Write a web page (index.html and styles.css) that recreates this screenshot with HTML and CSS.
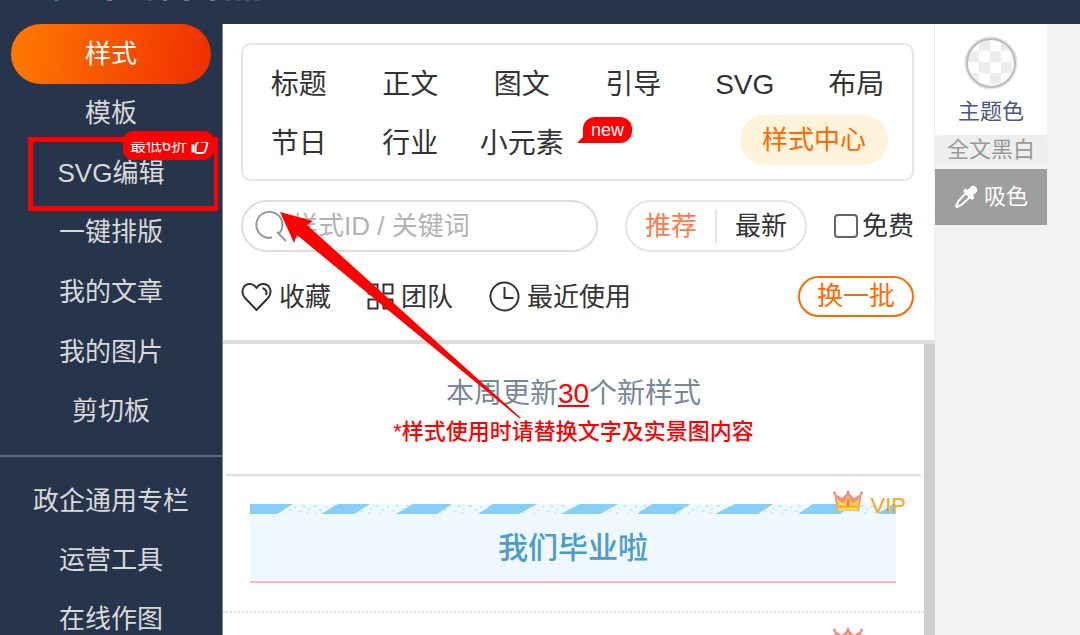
FILE: index.html
```html
<!DOCTYPE html>
<html lang="zh-CN">
<head>
<meta charset="utf-8">
<title>样式中心</title>
<link rel="stylesheet" href="styles.css">
</head>
<body>
<header class="topbar">
  <svg width="280" height="2" viewBox="0 0 280 2" aria-hidden="true">
    <path d="M55 .5h3" stroke="#4083ad"/><path d="M107 .5h2" stroke="#4083ad"/><path d="M109 .5h3" stroke="#b0675a"/>
    <path d="M163 .5h4M184 .5h5M210 .5h5" stroke="#707a8a"/>
    <path d="M143 .5h2M148 .5h5M225 .5h5M236 .5h5M245 .5h4M255 .5h5" stroke="#465268"/>
  </svg>
</header>
<div class="workspace">
  <nav class="sidebar">
    <div class="menu menu-main">
      <a class="menu-item active" href="#">样式</a>
      <a class="menu-item" href="#">模板</a>
      <a class="menu-item" href="#">SVG编辑
        <span class="promo">最低6折
          <svg width="18" height="20" viewBox="0 0 18 20" fill="none" stroke="#fff" stroke-width="2" aria-hidden="true"><path d="M2 8.500v8" stroke-width="3"/><path d="M5 8.500Q8 6 8 2.500Q11 1 11 6H15Q17 6 16 9L14 15.500Q13 17 11 17H6Q4.500 17 4.500 15z"/></svg>
        </span>
      </a>
      <a class="menu-item" href="#">一键排版</a>
      <a class="menu-item" href="#">我的文章</a>
      <a class="menu-item" href="#">我的图片</a>
      <a class="menu-item" href="#">剪切板</a>
    </div>
    <div class="menu menu-more">
      <a class="menu-item" href="#">政企通用专栏</a>
      <a class="menu-item" href="#">运营工具</a>
      <a class="menu-item" href="#">在线作图</a>
    </div>
  </nav>

  <main class="panel">
    <section class="filters">
      <div class="categories">
        <a href="#">标题</a><a href="#">正文</a><a href="#">图文</a><a href="#">引导</a><a href="#">SVG</a><a href="#">布局</a>
        <a href="#">节日</a><a href="#">行业</a>
        <a href="#" class="has-new">小元素<span class="new-tag">new</span></a>
        <button class="center-btn" type="button">样式中心</button>
      </div>
      <div class="search-row">
        <label class="search">
          <svg width="32" height="32" viewBox="0 0 32 32" fill="none" stroke="#999" stroke-width="2" aria-hidden="true"><path d="M17 27.500A13 13 0 1 1 23 24.500M22 22L31 31"/></svg>
          <input type="text" placeholder="样式ID / 关键词" aria-label="样式ID / 关键词">
        </label>
        <div class="sort">
          <button class="sort-btn on" type="button">推荐</button>
          <button class="sort-btn" type="button">最新</button>
        </div>
        <label class="free"><input type="checkbox">免费</label>
      </div>
      <div class="quick-row">
        <a class="quick" href="#">
          <svg width="31" height="30" viewBox="0 0 31 30" fill="none" stroke="#333" stroke-width="2" stroke-linejoin="round" aria-hidden="true"><path d="M15.500 28L4 16C-1 10 2 2 9 2Q13 2 15.500 6Q18 2 22 2C29 2 32 10 27 16z"/><path d="M21.500 6Q27 8 25 13"/></svg>收藏</a>
        <a class="quick" href="#">
          <svg width="27" height="27" viewBox="0 0 27 27" fill="none" stroke="#333" stroke-width="2" aria-hidden="true"><path d="M1.500 1.500h9v9h-9zM16.500 1.500h9v9h-9zM1.500 16.500h9v9h-9zM16.500 16.500h9v9h-9z"/></svg>团队</a>
        <a class="quick" href="#">
          <svg width="31" height="31" viewBox="0 0 31 31" fill="none" stroke="#333" stroke-width="2" aria-hidden="true"><circle cx="15.500" cy="15.500" r="14"/><path d="M15.500 6v11h9"/></svg>最近使用</a>
        <button class="refresh" type="button">换一批</button>
      </div>
    </section>

    <section class="results">
      <div class="result-list">
        <div class="notice">
          <h1>本周更新<a href="#">30</a>个新样式</h1>
          <p>*样式使用时请替换文字及实景图内容</p>
        </div>
        <article class="entry">
          <div class="vip">
            <svg class="crown" width="30" height="22" viewBox="0 0 30 22" aria-hidden="true"><path d="M1 3L9 8L15 2L21 8L29 3L26 21H4z" fill="#ee9288"/><path d="M3.500 8L11 14L15 5L19 14L26.500 8L25.500 21H4.500z" fill="#fbc83a"/><path d="M5 16.500h20" stroke="#eea02c"/><path d="M15 9v7" stroke="#e87a50" stroke-width="2"/><path d="M7 14h4M19 14h4M6 19h18" stroke="#ffdc60" stroke-width="2"/><g fill="#e78d8f"><circle cx="15" cy="2" r="1.500"/><circle cx="1.500" cy="3" r="1.500"/><circle cx="28.500" cy="3" r="1.500"/></g></svg>VIP
          </div>
          <div class="card">
            <svg class="ribbon" viewBox="0 0 646 10" preserveAspectRatio="none" aria-hidden="true">
              <defs><pattern id="snow" width="31" height="10" patternUnits="userSpaceOnUse"><rect width="31" height="10" fill="#eef8ff"/><g fill="#c3e6f8"><ellipse cx="3" cy="2" rx="2" ry="1"/><ellipse cx="9" cy="6" rx="1.500" ry="1"/><ellipse cx="14" cy="3" rx="1" ry="1"/><ellipse cx="19" cy="7" rx="2" ry=".8"/><ellipse cx="23" cy="2" rx="1.500" ry="1"/><ellipse cx="28" cy="5" rx="1" ry="1"/><ellipse cx="5" cy="9" rx="1" ry=".7"/><ellipse cx="26" cy="9" rx="1.500" ry=".7"/></g></pattern></defs>
              <rect width="646" height="10" fill="url(#snow)"/>
              <path fill="#87d0f3" d="M0 0H43L27 10H0zM88 0H120L104 10H71zM163 0H202L187 10H146zM243 0H287L269 10H228zM330 0H368L350 10H311zM402 0H440L425 10H387zM485 0H523L508 10H465zM563 0H605L590 10H548zM643 0H646V10H627z"/>
            </svg>
            <h2>我们毕业啦</h2>
          </div>
        </article>
        <article class="entry">
          <div class="vip">
            <svg class="crown" width="30" height="22" viewBox="0 0 30 22" aria-hidden="true"><path d="M1 3L9 8L15 2L21 8L29 3L26 21H4z" fill="#ee9288"/><path d="M3.500 8L11 14L15 5L19 14L26.500 8L25.500 21H4.500z" fill="#fbc83a"/><g fill="#e78d8f"><circle cx="15" cy="2" r="1.500"/><circle cx="1.500" cy="3" r="1.500"/><circle cx="28.500" cy="3" r="1.500"/></g></svg>VIP
          </div>
        </article>
      </div>
      <div class="scrollbar"></div>
    </section>
  </main>

  <aside class="tools">
    <button class="theme" type="button">
      <svg width="54" height="54" viewBox="0 0 54 54" aria-hidden="true"><defs><pattern id="chk" x="4" y="4" width="22" height="22" patternUnits="userSpaceOnUse"><rect width="22" height="22" fill="#fff"/><path d="M0 11h11v11H0zM11 0h11v11H11z" fill="#ededed"/></pattern></defs><circle cx="27" cy="27" r="25.500" fill="none" stroke="#e6e6e6" stroke-width="2"/><circle cx="27" cy="27" r="24" fill="url(#chk)" stroke="#bbb" stroke-width="2"/></svg>
      主题色</button>
    <button class="mono" type="button">全文黑白</button>
    <button class="picker" type="button">
      <svg width="24" height="24" viewBox="0 0 24 24" aria-hidden="true"><path d="M12 8L16 12L8 19.500L3 22L2 21L4.500 16z" fill="none" stroke="#fff" stroke-width="2"/><path d="M9 6L11.500 3.500L13.500 5L17 1.500Q19 0 22 2Q24 5 22.500 7L19 10.500L20.500 12.500L18 15z" fill="#fff"/></svg>吸色</button>
  </aside>
</div>
<div class="mark-box"></div>
<svg class="mark-arrow" width="242" height="208" viewBox="0 0 242 208" aria-hidden="true"><path d="M0 0L33 9L27 13L241 206L239 206L17 23L14 31z" fill="#f00"/></svg>
</body>
</html>
```
FILE: styles.css
```css
* { box-sizing: border-box; }
body {
  margin: 0;
  height: 100vh;
  display: flex;
  flex-direction: column;
  overflow: hidden;
  position: relative;
  background: #f1f3f3;
  color: #333;
  font: 26px/40px "Liberation Sans", "Noto Sans CJK SC", sans-serif;
}
a { color: inherit; text-decoration: none; }
button, input { font: inherit; color: inherit; padding: 0; }
button { border: 0; background: none; white-space: nowrap; }
h1, h2, p { margin: 0; }
svg { flex: none; }

.topbar { flex: none; height: 24px; background: #27354c; }
.topbar svg { display: block; }
.workspace { flex: 1; min-height: 0; display: flex; }

.sidebar {
  flex: none;
  width: 223px;
  background: #27354c;
  border-right: 1px solid #7d8594;
  color: #d9d9d9;
  overflow: hidden;
}
.menu { display: grid; grid-auto-rows: 1fr; padding: 0 11px; }
.menu-main { height: 417px; }
.menu-more { height: 194px; margin-top: 14px; padding-top: 14px; border-top: 2px solid #5b677a; }
.menu-item { position: relative; display: flex; align-items: center; justify-content: center; }
.menu-item.active {
  color: #fff;
  border-radius: 30px;
  background: linear-gradient(100deg, #ff7b00, #f02d00);
}
.promo {
  position: absolute;
  right: -3px;
  top: -12px;
  height: 29px;
  padding: 0 5px 0 7px;
  display: flex;
  align-items: center;
  gap: 4px;
  border-radius: 10px;
  background: #f00;
  color: #fff;
  font-size: 16px;
  line-height: 29px;
  white-space: nowrap;
}

.panel {
  flex: 1;
  min-width: 0;
  display: flex;
  flex-direction: column;
  background: #fff;
}
.filters { padding: 19px 20px 23px 18px; border-bottom: 4px solid #ddd; border-right: 1px solid #eee; }
.categories {
  display: grid;
  grid-template-columns: repeat(6, 1fr);
  grid-auto-rows: 59px;
  align-items: center;
  padding: 10px 0 6px;
  border: 2px solid #e6e6e6;
  border-radius: 10px;
  font-size: 28px;
  text-align: center;
}
.has-new { position: relative; }
.new-tag {
  position: absolute;
  left: 117px;
  top: -7px;
  width: 49px;
  height: 26px;
  border-radius: 12px 12px 12px 0;
  background: #f00;
  color: #fff;
  font-size: 18px;
  line-height: 26px;
}
.new-tag::before {
  content: "";
  position: absolute;
  left: -6px;
  bottom: 0;
  border: solid transparent;
  border-width: 0 0 8px 8px;
  border-bottom-color: #f00;
}
.center-btn {
  grid-column: 5 / 7;
  justify-self: end;
  align-self: start;
  height: 50px;
  margin-top: 1px;
  margin-right: 24px;
  padding: 0 22px;
  border-radius: 25px;
  background: #fff3dc;
  color: #ff6a00;
  font-size: 26px;
}
.search-row { display: flex; align-items: center; margin-top: 19px; }
.search {
  flex: 1;
  min-width: 0;
  height: 52px;
  display: flex;
  align-items: center;
  gap: 5px;
  padding: 0 12px;
  border: 2px solid #dedede;
  border-radius: 26px;
}
.search input { flex: 1; min-width: 0; height: 40px; border: 0; outline: 0; background: none; }
.search input::placeholder { color: #b3b3b3; opacity: 1; }
.sort {
  height: 52px;
  display: flex;
  align-items: center;
  margin-left: 27px;
  border: 2px solid #e6e6e6;
  border-radius: 26px;
}
.sort-btn { height: 34px; line-height: 34px; padding: 0 18px; }
.sort-btn.on { color: #ff7a45; border-right: 2px solid #e6e6e6; }
.free { display: flex; align-items: center; gap: 4px; margin-left: 27px; }
.free input {
  appearance: none;
  width: 24px;
  height: 24px;
  margin: 0;
  border: 2px solid #666;
  border-radius: 4px;
}
.quick-row { display: flex; align-items: center; gap: 36px; margin-top: 24px; }
.quick { display: flex; align-items: center; gap: 7px; }
.refresh {
  height: 41px;
  line-height: 37px;
  margin-left: auto;
  padding: 0 17px;
  border: 2px solid #ff6a00;
  border-radius: 21px;
  color: #ff6a00;
}

.results { flex: 1; min-height: 0; display: flex; }
.result-list { flex: 1; min-width: 0; overflow: hidden; }
.scrollbar { width: 11px; background: #cdcdcd; }
.notice {
  margin: 0 3px;
  padding: 30px 0 24px;
  border-bottom: 2px solid #ddd;
  text-align: center;
}
.notice h1 { font-size: 28px; font-weight: 400; color: #789; }
.notice h1 a { color: #f00; text-decoration: underline; }
.notice p { font-size: 22px; font-weight: 500; line-height: 36px; color: #f00; }
.entry { position: relative; padding: 28px 28px 28px 27px; border-bottom: 2px dotted #ddd; }
.card { background: #f0f8ff; border-bottom: 2px solid #ffb6c1; }
.ribbon { display: block; width: 100%; height: 10px; }
.card h2 {
  padding: 14px 0 13px;
  font-size: 30px;
  font-weight: 500;
  line-height: 40px;
  text-align: center;
  color: #4a9ccd;
}
.vip {
  position: absolute;
  right: 18px;
  top: 14px;
  display: flex;
  gap: 8px;
  font-size: 22px;
  line-height: 32px;
  color: #ffa31a;
}

.tools { flex: none; width: 112px; margin-right: 33px; display: flex; flex-direction: column; font-size: 22px; }
.theme {
  display: flex;
  flex-direction: column;
  align-items: center;
  padding: 12px 0 3px;
  background: #fff;
  color: #4a587c;
}
.theme svg { margin-bottom: 2px; }
.mono { height: 30px; line-height: 30px; border-radius: 5px; background: #eee; color: #999; }
.picker {
  height: 56px;
  margin-top: 4px;
  display: flex;
  align-items: center;
  justify-content: center;
  gap: 6px;
  background: #9e9e9e;
  color: #fff;
}

.mark-box { position: absolute; left: 28px; top: 137px; width: 190px; height: 74px; border: 5px solid #f00; border-right-width: 4px; }
.mark-arrow { position: absolute; left: 280px; top: 212px; }
```
